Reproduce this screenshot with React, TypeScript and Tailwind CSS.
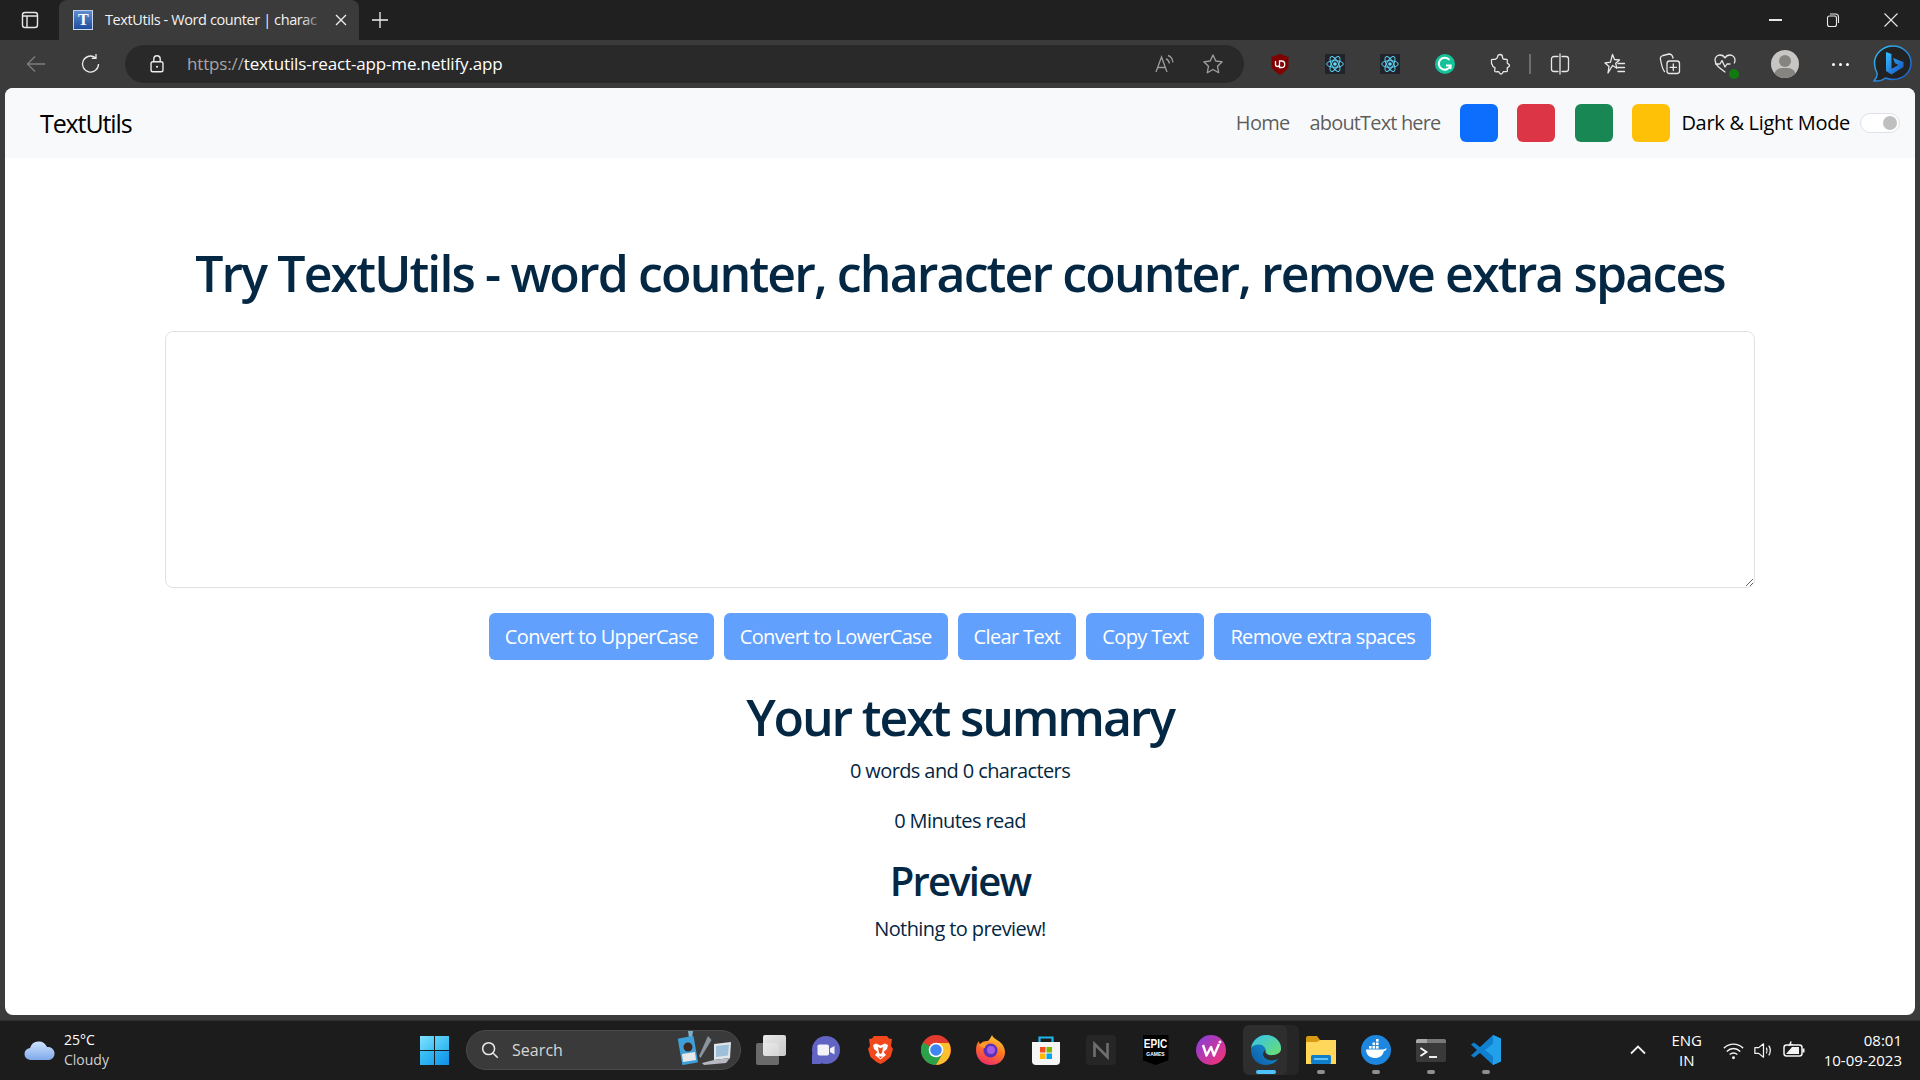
import React from "react";

const Slot = ({ w, children }: { w: string; children?: React.ReactNode }) => (
  <div className={`${w} h-full flex items-center justify-center shrink-0`}>{children}</div>
);

const S = ({ size = 22, vb = "0 0 24 24", children, className }: { size?: number; vb?: string; children: React.ReactNode; className?: string }) => (
  <svg width={size} height={size} viewBox={vb} fill="none" className={className}>{children}</svg>
);

const stroke = { stroke: "#e8e8e8", strokeWidth: 1.3, strokeLinecap: "round" as const, strokeLinejoin: "round" as const };

const ReactIcon = () => (
  <div className="w-[20px] h-[20px] bg-[#20232a] flex items-center justify-center">
    <svg width="20" height="20" viewBox="-12 -12 24 24" fill="none" stroke="#61dafb" strokeWidth="1.1">
      <circle r="2.2" fill="#61dafb" stroke="none" />
      <ellipse rx="10" ry="4" />
      <ellipse rx="10" ry="4" transform="rotate(60)" />
      <ellipse rx="10" ry="4" transform="rotate(120)" />
    </svg>
  </div>
);

const BingIcon = () => (
  <svg width="39" height="38" viewBox="0 0 39 38" fill="none">
    <defs>
      <linearGradient id="bg1" x1="0" y1="0" x2="1" y2="1">
        <stop offset="0" stopColor="#37bdff" />
        <stop offset="1" stopColor="#1550c0" />
      </linearGradient>
      <linearGradient id="bgs" x1="0" y1="0" x2="1" y2="1">
        <stop offset="0" stopColor="#36c3f5" />
        <stop offset="1" stopColor="#1a56c4" />
      </linearGradient>
    </defs>
    <path d="M20 1C10 1 1.500 8.500 1.500 18c0 5 1.500 8 2.500 10 .5 2-.5 5-3 8 5 .5 9-1 11.500-3 2.500 1 5 1.500 7.500 1.500 10 0 18-7 18-16.500S30 1 20 1z" fill="#222" stroke="url(#bgs)" strokeWidth="1.500" />
    <path d="M13 7l5.500 2v15l7-4-3.500-1.700-2-5.300 10.500 4v5l-12 7.500-5.500-3.500z" fill="url(#bg1)" />
  </svg>
);

const Chrome = () => (
  <svg width="30" height="30" viewBox="0 0 30 30">
    <circle cx="15" cy="15" r="15" fill="#e33b2e" />
    <path d="M15 15L2 7.500A15 15 0 0 0 15 30l7-12z" fill="#2aa24a" />
    <path d="M15 8h13a15 15 0 0 1-13 22l7-12z" fill="#fbc02d" />
    <circle cx="15" cy="15" r="7.300" fill="#fff" />
    <circle cx="15" cy="15" r="5.800" fill="#3f86f4" />
  </svg>
);

const Firefox = () => (
  <svg width="30" height="30" viewBox="0 0 30 30">
    <defs>
      <linearGradient id="ff" x1="0.700" y1="0" x2="0.300" y2="1">
        <stop offset="0" stopColor="#ffcf3a" />
        <stop offset="0.450" stopColor="#ff7a1f" />
        <stop offset="1" stopColor="#ef2a6a" />
      </linearGradient>
    </defs>
    <path d="M16 0c1 4 7 5 10 9 3 4 4 9 2 13-2 5-7 8-13 8C7 30 0 24 0 15c0-4 1-7 3-9 0 2 .5 3 1.500 3.500C6 6 10 6 12 6c2-2 3-4 4-6z" fill="url(#ff)" />
    <circle cx="14.500" cy="15.500" r="7" fill="#5e2fb8" />
    <circle cx="15" cy="15" r="4" fill="#a05ce6" />
    <path d="M3 10c3-3 7-3 9-1-2 1-3 2-3 4-2 0-4-1-6-3z" fill="#ff9a2a" />
  </svg>
);

const Meet = () => (
  <svg width="29" height="28" viewBox="0 0 29 28">
    <circle cx="15" cy="14" r="14" fill="#6264c4" />
    <path d="M1 18l0 10h8l6-3z" fill="#6264c4" />
    <rect x="6.500" y="8.500" width="11.500" height="11" rx="1.800" fill="#f2f2f8" />
    <path d="M19 12.500l4.500-2.500v8.500L19 16z" fill="#f2f2f8" />
  </svg>
);

const Brave = () => (
  <svg width="25" height="28" viewBox="0 0 25 28">
    <path d="M6 0h13l2 2.500 3 .5-1 7 2 3-2.500 8-6 5-4 2-4-2-6-5L0 13l2-3-1-7 3-.5z" fill="#f1481e" />
    <path d="M12.500 9.500l-4.500-2-3 1.500 1 4 3.500 3-2.500 3 5.500 4.500 5.500-4.500-2.500-3 3.500-3 1-4-3-1.500z" fill="#fff" />
    <path d="M10 11l2.500 1.200L15 11l-1 6-1.500 1-1.500-1z" fill="#f1481e" />
    <path d="M10.500 20.500h4l-2 2z" fill="#f1481e" />
  </svg>
);

const Store = () => (
  <svg width="30" height="30" viewBox="0 0 30 30">
    <path d="M8.500 7V2.500h13V7" stroke="#1fb6e8" strokeWidth="2.200" fill="none" />
    <path d="M1 7h28v19a4 4 0 0 1-4 4H5a4 4 0 0 1-4-4z" fill="#f5f5f5" />
    <rect x="9" y="12" width="5.500" height="5.500" fill="#f25022" />
    <rect x="15.500" y="12" width="5.500" height="5.500" fill="#7fba00" />
    <rect x="9" y="18.500" width="5.500" height="5.500" fill="#ffb900" />
    <rect x="15.500" y="18.500" width="5.500" height="5.500" fill="#00a4ef" />
  </svg>
);

const NotionN = () => (
  <svg width="30" height="30" viewBox="0 0 30 30">
    <rect x="0" y="0" width="30" height="30" rx="4" fill="#262626" />
    <path d="M8.500 22V9l13 13V8" stroke="#6e6e6e" strokeWidth="2.600" fill="none" />
  </svg>
);

const Epic = () => (
  <div className="w-[26px] h-[30px] bg-black flex flex-col items-center pt-[2px] [clip-path:polygon(0_0,100%_0,100%_84%,50%_100%,0_84%)] tracking-normal font-['Liberation_Sans',sans-serif]">
    <span className="text-white text-[10px] leading-[13px] font-bold [transform:scaleY(1.35)]">EPIC</span>
    <span className="mt-[1px] text-white text-[5px] leading-[7px] font-bold">GAMES</span>
  </div>
);

const Wps = () => (
  <svg width="30" height="30" viewBox="0 0 30 30">
    <defs>
      <linearGradient id="wp" x1="0" y1="0" x2="1" y2="1">
        <stop offset="0" stopColor="#7f3fe0" />
        <stop offset="1" stopColor="#ff2f6d" />
      </linearGradient>
    </defs>
    <circle cx="15" cy="15" r="15" fill="url(#wp)" />
    <path d="M7 10l3.500 10.500L15 12l3 8.500L23 9" stroke="#fff" strokeWidth="2.400" fill="none" strokeLinejoin="round" />
    <circle cx="24" cy="7" r="1.500" fill="#fff" />
  </svg>
);

const Edge = () => (
  <svg width="30" height="30" viewBox="0 0 30 30">
    <defs>
      <linearGradient id="ed1" x1="0" y1="1" x2="1" y2="0">
        <stop offset="0" stopColor="#0c59a4" />
        <stop offset="1" stopColor="#1ba5e0" />
      </linearGradient>
      <linearGradient id="ed2" x1="0" y1="0" x2="1" y2="1">
        <stop offset="0" stopColor="#35c1f1" />
        <stop offset="1" stopColor="#6ce06a" />
      </linearGradient>
    </defs>
    <path d="M15 0C6 0 0 7 0 15c0 9 7 15 15 15 5 0 9-2 12-6-4 2-10 2-13-1-3-3-2-6 0-8-1 4 4 5.500 8.500 4.500 4.500-1 7.500-3 7.500-6.500C30 6 23 0 15 0z" fill="url(#ed1)" />
    <path d="M0 13C2 4 9 0 15 0c8 0 15 6 15 13.500 0 4-3 6-7.500 6.500-4 .5-7.500-.5-7.500-3 .5-3.500-2.500-8-8-7.500-3.500.5-6 1.500-7 3.500z" fill="url(#ed2)" />
  </svg>
);

const Files = () => (
  <svg width="30" height="28" viewBox="0 0 30 28">
    <path d="M0 2a2 2 0 0 1 2-2h9l3 4h16v5H0z" fill="#d89a12" />
    <path d="M0 6h11l3-2h16v24H0z" fill="#ffd75a" />
    <rect x="5" y="19" width="20" height="9" rx="1.500" fill="#0f7ecb" />
    <rect x="8" y="22" width="14" height="2" fill="#62c1f2" />
  </svg>
);

const Docker = () => (
  <svg width="30" height="30" viewBox="0 0 30 30">
    <circle cx="15" cy="15" r="15" fill="#1d87e0" />
    <path d="M5 14.500h17c1.500 0 2.500-1 3.500-1.500 0 1.800-1 3-2.700 3.200C22 20.500 18.500 23 14 23c-6 0-9-4-9-8.500z" fill="#fff" />
    <g fill="#fff">
      <rect x="8" y="11" width="2.600" height="2.600" />
      <rect x="11.500" y="11" width="2.600" height="2.600" />
      <rect x="15" y="11" width="2.600" height="2.600" />
      <rect x="11.500" y="7.500" width="2.600" height="2.600" />
      <rect x="15" y="7.500" width="2.600" height="2.600" />
      <rect x="15" y="4" width="2.600" height="2.600" />
    </g>
  </svg>
);

const Terminal = () => (
  <svg width="30" height="23" viewBox="0 0 30 23">
    <rect x="0" y="0" width="30" height="23" rx="2" fill="#3a3a3a" />
    <path d="M0 2a2 2 0 0 1 2-2h9v4H0z" fill="#a8a8a8" />
    <path d="M11 0h17a2 2 0 0 1 2 2v2H11z" fill="#787878" />
    <path d="M4.500 9l6 4-6 4" stroke="#fff" strokeWidth="1.800" fill="none" />
    <path d="M13 18h8" stroke="#fff" strokeWidth="1.800" />
  </svg>
);

const VSCode = () => (
  <svg width="30" height="30" viewBox="0 0 30 30">
    <path d="M22 0l8 3.500v23L22 30 9 18l-6 4.500-3-2L6 15 0 9.500l3-2L9 12z" fill="#0f7fd0" />
    <path d="M22 0l8 3.500v23L22 30zM22 8.500L14 15l8 6.500z" fill="#23a0ea" fillRule="evenodd" />
  </svg>
);

const TaskIcon = ({ children, dot, active }: { children: React.ReactNode; dot?: boolean; active?: boolean }) => (
  <div className="relative w-[55px] h-[50px] flex items-center justify-center shrink-0">
    {active && <span className="absolute left-[11px] top-0 w-[50px] h-[50px] rounded-md bg-[#262626]" />}
    {active && <span className="absolute left-[5px] top-0 w-[44px] h-[50px] rounded-md bg-[#2e2e2e]" />}
    <span className="relative flex">{children}</span>
    {dot && <span className="absolute bottom-[1px] left-1/2 -translate-x-1/2 w-[8px] h-[4px] rounded-full bg-[#8f8f8f]" />}
    {active && <span className="absolute bottom-[1px] left-1/2 -translate-x-1/2 w-[20px] h-[4px] rounded-full bg-[#4cc2ff]" />}
  </div>
);

const buttons = ["Convert to UpperCase", "Convert to LowerCase", "Clear Text", "Copy Text", "Remove extra spaces"];

export default function App() {
  return (
    <div className="w-[1920px] h-[1080px] flex flex-col overflow-hidden bg-[#3b3b3b] font-['Open_Sans','Noto_Sans',sans-serif] tracking-[-0.6px]">
      {/* Title bar */}
      <div className="h-10 bg-[#202020] flex items-center text-white shrink-0">
        <Slot w="w-[59px]">
          <S size={20} vb="0 0 20 20">
            <rect x="2.500" y="2.500" width="15" height="15" rx="2.500" stroke="#e8e8e8" strokeWidth="1.400" />
            <path d="M2.500 6h15M7 6v11" stroke="#e8e8e8" strokeWidth="1.400" />
          </S>
        </Slot>
        <div className="relative w-[300px] h-full bg-[#3b3b3b] rounded-t-lg flex items-center pl-[14px]">
          <div className="w-[20px] h-[20px] bg-gradient-to-b from-[#5d8dd0] to-[#1f4f9e] flex items-center justify-center border border-white/70 shrink-0">
            <span className="font-['Liberation_Serif',serif] font-bold text-white text-[16px] leading-none">T</span>
          </div>
          <span className="ml-[12px] w-[218px] whitespace-nowrap text-[14.5px] text-[#f2f2f2] tracking-[-0.4px]">TextUtils - Word counter | charac</span>
          <div className="absolute left-[242px] w-[24px] h-6 bg-gradient-to-r from-transparent to-[#3b3b3b]" />
          <S size={20} vb="0 0 20 20" className="ml-[8px] shrink-0">
            <path d="M5 5l10 10M15 5L5 15" stroke="#f0f0f0" strokeWidth="1.300" />
          </S>
        </div>
        <Slot w="w-[42px]">
          <S size={20} vb="0 0 20 20">
            <path d="M10 2v16M2 10h16" stroke="#f0f0f0" strokeWidth="1.300" />
          </S>
        </Slot>
        <div className="flex-1" />
        <Slot w="w-[58px]"><div className="w-[13px] h-[1.500px] bg-[#e8e8e8]" /></Slot>
        <Slot w="w-[58px]">
          <S size={16} vb="0 0 16 16">
            <rect x="2.500" y="4" width="9" height="10.500" rx="2" stroke="#e8e8e8" strokeWidth="1.100" />
            <path d="M5 2h5.500a3 3 0 0 1 3 3v6" stroke="#e8e8e8" strokeWidth="1.100" />
          </S>
        </Slot>
        <Slot w="w-[58px]">
          <S size={16} vb="0 0 16 16">
            <path d="M1.500 1.500l13 13M14.500 1.500l-13 13" stroke="#e8e8e8" strokeWidth="1.100" />
          </S>
        </Slot>
      </div>

      {/* Toolbar */}
      <div className="h-12 bg-[#3b3b3b] flex items-center pl-2 shrink-0">
        <Slot w="w-[55px]">
          <S size={24}>
            <path d="M21 12H3.500M11 4.500L3.500 12l7.500 7.500" stroke="#7d7d7d" strokeWidth="1.300" />
          </S>
        </Slot>
        <Slot w="w-[55px]">
          <S size={24}>
            <path d="M19.500 12a8 8 0 1 1-3-6.200M17 2v4.300h-4.300" stroke="#ececec" strokeWidth="1.300" />
          </S>
        </Slot>
        <div className="ml-[7px] w-[1119px] h-[38px] rounded-[19px] bg-[#292929] flex items-center pl-[21px] pr-[19px] shrink-0">
          <S size={22}>
            <rect x="5.500" y="9.500" width="13" height="11" rx="2" stroke="#ececec" strokeWidth="1.500" />
            <path d="M8.500 9.500V6.500a3.500 3.500 0 0 1 7 0v3" stroke="#ececec" strokeWidth="1.500" />
            <circle cx="12" cy="15" r="1.200" fill="#ececec" />
          </S>
          <span className="ml-[19px] text-[17px] text-[#a6a6a6] tracking-[-0.15px]">https://<span className="text-white">textutils-react-app-me.netlify.app</span></span>
          <div className="flex-1" />
          <S size={24}>
            <path d="M4 20l5.500-15L15 20M6 15.500h7" stroke="#9b9b9b" strokeWidth="1.300" />
            <path d="M14 7c2 .500 3 2 3.500 4.500M16 3.500c3 .800 4.500 3.500 5 7" stroke="#9b9b9b" strokeWidth="1.300" />
          </S>
          <div className="w-[25px]" />
          <S size={24}>
            <path d="M12 3l2.800 6 6.400.800-4.700 4.400 1.200 6.500L12 17.500 6.300 20.700l1.200-6.500L2.800 9.800 9.200 9z" stroke="#a0a0a0" strokeWidth="1.300" strokeLinejoin="round" />
          </S>
        </div>
        <div className="w-[8px] shrink-0" />
        <Slot w="w-[55px]">
          <svg width="18" height="21" viewBox="0 0 18 21">
            <path d="M9 0l8.500 3v8c0 4-4.500 7.500-8.500 10C5 18.500.5 15 .5 11V3z" fill="#800000" />
            <path d="M4.500 7v3.500a2 2 0 0 0 4 0V7M8.500 7h2a3 3 0 0 1 0 6.500h-2z" stroke="#fff" strokeWidth="1.300" fill="none" />
          </svg>
        </Slot>
        <Slot w="w-[55px]"><ReactIcon /></Slot>
        <Slot w="w-[55px]"><ReactIcon /></Slot>
        <Slot w="w-[55px]">
          <svg width="20" height="20" viewBox="0 0 20 20">
            <circle cx="10" cy="10" r="10" fill="#15c39a" />
            <path d="M14.500 6a6 6 0 1 0 1 5.500H11" stroke="#fff" strokeWidth="2" fill="none" />
            <path d="M15.500 15v-3.500" stroke="#fff" strokeWidth="2" />
          </svg>
        </Slot>
        <Slot w="w-[55px]">
          <S size={24}>
            <path d="M9.500 5a2.500 2.500 0 0 1 5 0c0 1 .2 1.800 1 2.200.8.300 2.500-.3 3.500.3 1 .8 0 2.500.2 3.500.4 1 2.300 1 2.300 2.500s-2 1.500-2.300 2.500c-.2 1 .8 2.700-.2 3.500-1 .6-2.500-.2-3.500.2-1 .5-.8 2.300-2.500 2.300s-1.500-2-2.500-2.300c-1-.3-2.500.6-3.500-.2-1-.8.2-2.500 0-3.500-.4-1-2.500-1-2.500-2.500S3 11.800 3.500 11c.4-1-.6-2.700.3-3.500 1-.6 2.700.3 3.700-.3.8-.4 2-1.200 2-2.200z" {...stroke} />
          </S>
        </Slot>
        <Slot w="w-[5px]"><div className="w-[2px] h-[20px] bg-[#6e6e6e]" /></Slot>
        <Slot w="w-[55px]">
          <S size={24}>
            <path d="M12 2v20M10 4.500H6a2.500 2.500 0 0 0-2.500 2.500v10A2.500 2.500 0 0 0 6 19.500h4M14 4.500h4a2.500 2.500 0 0 1 2.500 2.500v10a2.500 2.500 0 0 1-2.500 2.500h-4" {...stroke} />
          </S>
        </Slot>
        <Slot w="w-[55px]">
          <S size={24}>
            <path d="M9.500 2.500l2 5 5 .500-3.800 3.300 1.200 5-4.400-2.800L5 21l1-6.500-4-3.500 5.500-.8zM15 11.500h6.500M15 15.500h6.500M15 19.500h6.500" {...stroke} />
          </S>
        </Slot>
        <Slot w="w-[55px]">
          <S size={24}>
            <rect x="9" y="9" width="12.500" height="12.500" rx="2.500" {...stroke} />
            <path d="M15.300 12v6.500M12 15.300h6.500M6.500 19.500C5 18 3.500 13 2.500 7.500 2 5.500 3.500 4 5 3.500l6-1.500c2 0 3.500 1.500 4 4" {...stroke} />
          </S>
        </Slot>
        <Slot w="w-[55px]">
          <div className="relative flex">
            <S size={24}>
              <path d="M12 20C7 16.500 2 13 2 8 2 5 4.500 3 7 3c2 0 4 1 5 3 1-2 3-3 5-3 2.500 0 5 2 5 5 0 1-.2 2-.7 3M2.500 12h4.500l2-3.500 3 6.500 2-3h3" {...stroke} />
            </S>
            <span className="absolute right-[-2px] bottom-[-3px] w-[10px] h-[10px] rounded-full bg-[#107c10] flex items-center justify-center" />
          </div>
        </Slot>
        <Slot w="w-[65px]">
          <div className="w-[28px] h-[28px] rounded-full bg-[#c8c6c4] relative overflow-hidden flex justify-center">
            <div className="absolute top-[5px] w-[12px] h-[12px] rounded-full bg-[#868481]" />
            <div className="absolute top-[18px] w-[22px] h-[16px] rounded-full bg-[#868481]" />
          </div>
        </Slot>
        <Slot w="w-[47px]">
          <div className="flex gap-[4px]">
            <span className="w-[3px] h-[3px] rounded-full bg-white" />
            <span className="w-[3px] h-[3px] rounded-full bg-white" />
            <span className="w-[3px] h-[3px] rounded-full bg-white" />
          </div>
        </Slot>
        <Slot w="w-[56px]"><BingIcon /></Slot>
      </div>

      {/* Page */}
      <div className="mx-[5px] h-[927px] bg-white rounded-lg overflow-hidden shrink-0 flex flex-col text-[#042743]">
        <nav className="h-[70px] bg-[#f8f9fa] flex items-center pl-[35px] pr-[15px] shrink-0">
          <span className="pt-[2px] text-[25px] text-black tracking-[-1.1px]">TextUtils</span>
          <div className="flex-1" />
          <span className="text-[20px] text-black/65 tracking-[-0.7px]">Home</span>
          <span className="ml-[20px] text-[20px] text-black/65 tracking-[-0.85px]">aboutText here</span>
          <div className="ml-[20px] w-[38px] h-[38px] rounded-[6px] bg-[#0d6efd]" />
          <div className="ml-[19px] w-[38px] h-[38px] rounded-[6px] bg-[#dc3545]" />
          <div className="ml-[20px] w-[38px] h-[38px] rounded-[6px] bg-[#198754]" />
          <div className="ml-[19px] w-[38px] h-[38px] rounded-[6px] bg-[#ffc107]" />
          <span className="ml-[11px] text-[20px] text-black tracking-[-0.3px]">Dark &amp; Light Mode</span>
          <div className="ml-[10px] w-[40px] h-[20px] rounded-full bg-white border border-[#dee2e6] flex items-center justify-end pr-[2px]">
            <div className="w-[14px] h-[14px] rounded-full bg-[#bfbfbf]" />
          </div>
        </nav>
        <main className="w-[1590px] mx-auto flex flex-col items-center text-center pt-[85px]">
          <h1 className="text-[50px] leading-[60px] font-semibold whitespace-nowrap tracking-[-1.87px]">Try TextUtils - word counter, character counter, remove extra spaces</h1>
          <textarea className="mt-[28px] w-full h-[257px] block rounded-lg border border-[#dee2e6] bg-white outline-none" aria-label="Text" />
          <div className="mt-[25px] flex gap-[10px]">
            {buttons.map((b) => (
              <button key={b} className="h-[47px] px-[16px] rounded-[6px] bg-[#62a0fe] text-white text-[20px] tracking-[-0.65px] whitespace-nowrap">{b}</button>
            ))}
          </div>
          <h2 className="mt-[27px] text-[50px] leading-[60px] font-semibold tracking-[-2.15px]">Your text summary</h2>
          <p className="mt-[9px] text-[20px] leading-[30px] tracking-[-0.6px]">0 words and 0 characters</p>
          <p className="mt-[20px] text-[20px] leading-[30px] tracking-[-0.6px]">0 Minutes read</p>
          <h3 className="mt-[21px] text-[40px] leading-[48px] font-semibold tracking-[-1.8px]">Preview</h3>
          <p className="mt-[9px] text-[20px] leading-[30px] tracking-[-0.6px]">Nothing to preview!</p>
        </main>
      </div>

      {/* Taskbar */}
      <div className="mt-[5px] flex-1 bg-[#1c1c1c] border-t border-[#2e2e2e] pb-[1px] flex items-center text-white">
        <div className="w-[414px] pl-[24px] flex items-center shrink-0">
          <svg width="32" height="22" viewBox="0 0 32 22">
            <defs>
              <linearGradient id="cl" x1="0" y1="0" x2="0" y2="1">
                <stop offset="0" stopColor="#cfe3ff" />
                <stop offset="1" stopColor="#7fa9ea" />
              </linearGradient>
            </defs>
            <path d="M7 21a6 6 0 0 1-1-12 9 9 0 0 1 17-1 6.500 6.500 0 0 1 2 13z" fill="url(#cl)" />
          </svg>
          <div className="ml-[8px] text-[14px] leading-[20px] tracking-[0px] mt-[-1px]">
            <div>25°C</div>
            <div className="text-[#cfcfcf]">Cloudy</div>
          </div>
        </div>
        <div className="w-[40px] h-[40px] flex items-center justify-center shrink-0">
          <div className="grid grid-cols-2 gap-[1px] w-[29px] h-[29px]">
            <div className="bg-gradient-to-br from-[#7fe3ff] to-[#3cc0f5]" />
            <div className="bg-gradient-to-br from-[#5fd5fb] to-[#2cb3f2]" />
            <div className="bg-gradient-to-br from-[#3fc4f7] to-[#1ea4ee]" />
            <div className="bg-gradient-to-br from-[#2cb3f2] to-[#0f8fe8]" />
          </div>
        </div>
        <div className="ml-[12px] w-[275px] h-[40px] rounded-[20px] bg-[#3a3a3a] border border-[#4a4a4a] flex items-center pl-[12px] pr-[5px] shrink-0">
          <S size={22}>
            <circle cx="10.500" cy="10.500" r="6.500" stroke="#e8e8e8" strokeWidth="1.700" />
            <path d="M15.500 15.500l5 5" stroke="#e8e8e8" strokeWidth="1.700" />
          </S>
          <span className="ml-[11px] text-[16px] text-[#d6d6d6] tracking-[0.05px]">Search</span>
          <div className="flex-1" />
          <svg width="60" height="38" viewBox="0 0 60 38">
            <path d="M13 0l5 0-1 7-3 0z" fill="#7fb0c8" />
            <rect x="5" y="6" width="16" height="27" rx="1" fill="#3f9fd8" transform="rotate(-10 13 20)" />
            <circle cx="13" cy="16" r="4.500" fill="#3a2a20" />
            <path d="M7 23l13-2 1 8-13 2z" fill="#e8e8e8" />
            <path d="M33 5l-9 20 1.500 2 11-18z" fill="#8a949c" />
            <path d="M39 13l17-2-1 16-16 2z" fill="#dfe6ea" />
            <path d="M41 15l13-1.500-1 11-12 1.500z" fill="#9fbfd8" />
            <path d="M27 32l12-3 16-2-4 5-22 2z" fill="#b9b9c4" />
          </svg>
        </div>
        <div className="w-[2px] shrink-0" />
        <TaskIcon>
          <div className="relative w-[30px] h-[30px]">
            <div className="absolute left-0 top-[8px] w-[23px] h-[22px] rounded-[2px] bg-[#6a6a6a]" />
            <div className="absolute right-0 top-0 w-[23px] h-[21px] rounded-[2px] bg-gradient-to-br from-[#ffffff] to-[#dcdcdc] opacity-90" />
          </div>
        </TaskIcon>
        <TaskIcon><Meet /></TaskIcon>
        <TaskIcon><Brave /></TaskIcon>
        <TaskIcon><Chrome /></TaskIcon>
        <TaskIcon><Firefox /></TaskIcon>
        <TaskIcon><Store /></TaskIcon>
        <TaskIcon><NotionN /></TaskIcon>
        <TaskIcon><Epic /></TaskIcon>
        <TaskIcon><Wps /></TaskIcon>
        <TaskIcon active><Edge /></TaskIcon>
        <TaskIcon dot><Files /></TaskIcon>
        <TaskIcon dot><Docker /></TaskIcon>
        <TaskIcon dot><Terminal /></TaskIcon>
        <TaskIcon dot><VSCode /></TaskIcon>
        <div className="flex-1" />
        <S size={20} vb="0 0 20 20">
          <path d="M3 13.500l7-7 7 7" stroke="#f0f0f0" strokeWidth="1.800" />
        </S>
        <div className="ml-[14px] w-[50px] text-center text-[15px] leading-[20px] tracking-[0px]">ENG<br />IN</div>
        <div className="ml-[10px] flex items-center gap-[7px]">
          <S size={23}>
            <path d="M2 9.500c6-5.500 14-5.500 20 0M5 13c4-4 10-4 14 0M8 16.200c2.500-2 5.500-2 8 0" stroke="#f4f4f4" strokeWidth="1.500" />
            <circle cx="12" cy="19.500" r="1.500" fill="#f4f4f4" />
          </S>
          <S size={23}>
            <path d="M3 9h4l5-4v14l-5-4H3z" stroke="#f4f4f4" strokeWidth="1.300" strokeLinejoin="round" />
            <path d="M15 9c1 2 1 4 0 6M17.500 7c2 3 2 7 0 10" stroke="#f4f4f4" strokeWidth="1.300" />
          </S>
          <S size={24}>
            <rect x="2" y="7" width="18" height="11" rx="2.500" stroke="#f4f4f4" strokeWidth="1.500" />
            <path d="M4 16l6-7h7v7z" fill="#f4f4f4" />
            <path d="M21.500 10.500v4" stroke="#f4f4f4" strokeWidth="2" />
            <path d="M7 8l2-4.500-.5 3H11" stroke="#f4f4f4" strokeWidth="1.200" />
          </S>
        </div>
        <div className="ml-[18px] mr-[18px] text-right text-[15px] leading-[20px] tracking-[0px]">08:01<br />10-09-2023</div>
      </div>
    </div>
  );
}
